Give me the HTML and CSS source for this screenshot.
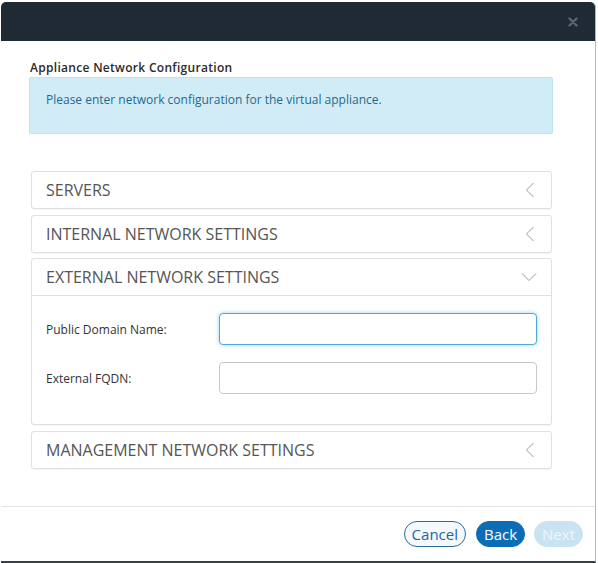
FILE: index.html
```html
<!DOCTYPE html>
<html>
<head>
<meta charset="utf-8">
<link rel="stylesheet" href="styles.css">
</head>
<body>
<div class="dialog">
  <div class="dialog-header">
    <svg class="close" width="10" height="10" viewBox="0 0 10 10"><path d="M1.5 1.5 L8.5 8.5 M8.5 1.5 L1.5 8.5" stroke="#5b6670" stroke-width="2.4" stroke-linecap="round"/></svg>
  </div>
  <div class="dialog-body">
    <div class="title">Appliance Network Configuration</div>
    <div class="alert">Please enter network configuration for the virtual appliance.</div>
    <div class="accordion">
      <div class="panel">
        <div class="panel-heading">
          <span>SERVERS</span>
          <svg class="chev" width="10" height="16" viewBox="0 0 10 16"><path d="M8.5 1 L1.5 8 L8.5 15" fill="none" stroke="#9a9a9a" stroke-width="1"/></svg>
        </div>
      </div>
      <div class="panel">
        <div class="panel-heading">
          <span>INTERNAL NETWORK SETTINGS</span>
          <svg class="chev" width="10" height="16" viewBox="0 0 10 16"><path d="M8.5 1 L1.5 8 L8.5 15" fill="none" stroke="#9a9a9a" stroke-width="1"/></svg>
        </div>
      </div>
      <div class="panel">
        <div class="panel-heading open">
          <span>EXTERNAL NETWORK SETTINGS</span>
          <svg class="chev-down" width="16" height="10" viewBox="0 0 16 10"><path d="M1 1.5 L8 8.5 L15 1.5" fill="none" stroke="#9a9a9a" stroke-width="1"/></svg>
        </div>
        <div class="panel-body">
          <div class="field">
            <label>Public Domain Name:</label>
            <input class="input focused" type="text">
          </div>
          <div class="field">
            <label>External FQDN:</label>
            <input class="input" type="text">
          </div>
        </div>
      </div>
      <div class="panel">
        <div class="panel-heading">
          <span>MANAGEMENT NETWORK SETTINGS</span>
          <svg class="chev" width="10" height="16" viewBox="0 0 10 16"><path d="M8.5 1 L1.5 8 L8.5 15" fill="none" stroke="#9a9a9a" stroke-width="1"/></svg>
        </div>
      </div>
    </div>
  </div>
  <div class="dialog-footer">
    <button class="btn btn-outline">Cancel</button>
    <button class="btn btn-primary">Back</button>
    <button class="btn btn-disabled">Next</button>
  </div>
</div>
</body>
</html>
```
FILE: styles.css
```css
html, body {
  margin: 0;
  padding: 0;
  background: #ffffff;
}
body {
  font-family: "Open Sans", "Noto Sans", sans-serif;
  width: 598px;
  height: 563px;
  overflow: hidden;
}
.dialog {
  margin: 2px 2px 0 1px;
  height: 561px;
  box-sizing: border-box;
  border-right: 1px solid #b8b8b8;
  border-bottom: 2px solid #3a3f44;
  border-radius: 5px 5px 0 0;
  display: flex;
  flex-direction: column;
  background: #fff;
}
.dialog-header {
  height: 39px;
  background: #1f2a35;
  border-radius: 5px 5px 0 0;
  display: flex;
  align-items: center;
  justify-content: flex-end;
  padding-right: 17px;
}
.dialog-body {
  padding: 19px 42px 0 28px;
  flex: 1;
}
.title {
  font-size: 12px;
  font-weight: 600;
  color: #2a2a2a;
  line-height: 16px;
  letter-spacing: 0.3px;
  padding-left: 1px;
}
.alert {
  margin-top: 1px;
  height: 57px;
  box-sizing: border-box;
  background: #d2ecf7;
  border: 1px solid #bfe2f1;
  border-radius: 2px;
  color: #1f6a8c;
  font-size: 12px;
  padding: 14px 16px;
  line-height: 16px;
}
.accordion {
  margin: 37px 1px 0 2px;
  display: flex;
  flex-direction: column;
  gap: 5.5px;
}
.panel {
  border: 1px solid #e0e0e0;
  border-radius: 3px;
  background: #fff;
  box-shadow: 0 1px 1px rgba(0,0,0,0.04);
}
.panel-heading {
  height: 36px;
  display: flex;
  align-items: center;
  justify-content: space-between;
  padding: 0 16px 0 14px;
  font-size: 16px;
  color: #555;
}
.panel-heading.open {
  border-bottom: 1px solid #e0e0e0;
  padding-right: 14px;
}
.panel-body {
  padding: 17px 14px 30px 14px;
  display: flex;
  flex-direction: column;
  gap: 17px;
}
.field {
  display: flex;
  align-items: center;
}
.field label {
  width: 173px;
  font-size: 12px;
  color: #333;
}
.input {
  flex: 1;
  height: 32px;
  box-sizing: border-box;
  border: 1px solid #c8c8c8;
  border-radius: 4px;
  outline: none;
  margin: 0;
  padding: 0 8px;
  font-family: inherit;
}
.input.focused {
  border-color: #4ea9d3;
  box-shadow: 0 0 4px rgba(80, 170, 215, 0.55);
}
.dialog-footer {
  height: 55px;
  border-top: 1px solid #e3e3e3;
  display: flex;
  align-items: center;
  justify-content: flex-end;
  padding: 0 12px 0 0;
  box-sizing: border-box;
}
.btn {
  height: 26px;
  border-radius: 13px;
  font-family: inherit;
  font-size: 15px;
  padding: 0 7px;
  line-height: 1;
  margin: 0;
}
.btn-outline {
  background: #f6f9fc;
  border: 1px solid #2d6d9b;
  color: #1b67a3;
  margin-right: 10px;
}
.btn-primary {
  background: #0a6db5;
  border: 1px solid #0a6db5;
  color: #fff;
  margin-right: 9px;
}
.btn-disabled {
  background: #c9e3f3;
  border: 1px solid #c9e3f3;
  color: #edf6fb;
}
```
